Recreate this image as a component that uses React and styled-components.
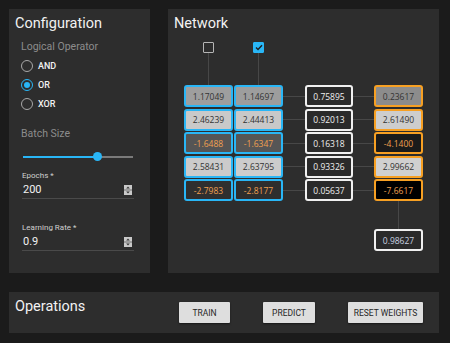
import styled, { createGlobalStyle } from 'styled-components'

const GlobalStyle = createGlobalStyle`
  html, body {
    margin: 0;
    padding: 0;
    background: #1b1b1b;
    font-family: Roboto, "Liberation Sans", sans-serif;
  }
`

const Page = styled.div`
  width: 450px;
  height: 343px;
  box-sizing: border-box;
  padding: 9px 11px 0 9px;
  display: flex;
  flex-direction: column;
  gap: 19px;
`
const TopRow = styled.div`
  display: flex;
  gap: 18px;
  height: 264px;
`
const Panel = styled.section`
  background: #2d2d2d;
  box-sizing: border-box;
  width: ${(p) => p.$width}px;
`
const Title = styled.h2`
  margin: 0;
  font-size: 14.5px;
  font-weight: 400;
  color: #f2f2f2;
  line-height: 17px;
`

const ConfigPanel = styled(Panel)`
  padding: 6px 0 0 6px;
`
const ConfigBody = styled.div`
  padding: 0 0 0 6px;
  display: flex;
  flex-direction: column;
`
const GroupLabel = styled.div`
  font-size: 10.5px;
  color: #8c8c8c;
  line-height: 13px;
  margin-top: ${(p) => p.$top}px;
`
const RadioList = styled.div`
  display: flex;
  flex-direction: column;
  gap: 7px;
  margin-top: 7px;
`
const RadioRow = styled.label`
  display: flex;
  align-items: center;
  gap: 5px;
  font-size: 9px;
  font-weight: 500;
  color: #f2f2f2;
  height: 12px;
`
const RadioDot = styled.span`
  width: 12px;
  height: 12px;
  box-sizing: border-box;
  border-radius: 50%;
  border: 1.5px solid ${(p) => (p.$on ? '#29b6f6' : '#a8a8a8')};
  display: flex;
  align-items: center;
  justify-content: center;
  &::after {
    content: '';
    width: 6px;
    height: 6px;
    border-radius: 50%;
    background: ${(p) => (p.$on ? '#29b6f6' : 'transparent')};
  }
`
const Slider = styled.div`
  margin: 12px 0 0 2px;
  width: 110px;
  height: 9px;
  display: flex;
  align-items: center;
`
const SliderFill = styled.div`
  height: 2px;
  background: #29b6f6;
`
const SliderThumb = styled.div`
  width: 9px;
  height: 9px;
  border-radius: 50%;
  background: #29b6f6;
  margin: 0 -4.5px;
  position: relative;
`
const SliderRest = styled.div`
  flex: 1;
  height: 2px;
  background: #7a7a7a;
`
const Field = styled.div`
  margin: ${(p) => p.$top}px 0 0 1px;
  width: 112px;
  border-bottom: 1px solid #4a4a4a;
  padding-bottom: 3px;
`
const FieldLabel = styled.div`
  font-size: 8px;
  color: #cfcfcf;
  line-height: 9px;
`
const FieldRow = styled.div`
  display: flex;
  align-items: center;
  justify-content: space-between;
  margin-top: 4px;
  padding: 0 2px 0 1px;
  height: 11px;
`
const FieldValue = styled.span`
  font-size: 11px;
  color: #f2f2f2;
`

const Spinner = () => (
  <svg width="8" height="10" viewBox="0 0 8 10">
    <rect x="0" y="0" width="8" height="10" fill="#c9c9c9" />
    <rect x="0" y="4.6" width="8" height="0.8" fill="#5a5a5a" />
    <path d="M2.2 3.4 L4 1.6 L5.8 3.4 Z" fill="#333" />
    <path d="M2.2 6.6 L4 8.4 L5.8 6.6 Z" fill="#333" />
  </svg>
)

const NetPanel = styled(Panel)`
  padding: 6px 0 0 6px;
  display: flex;
  flex-direction: column;
`
const Diagram = styled.div`
  margin: 10px 0 0 10px;
  display: flex;
  flex-direction: column;
`
const InputHeads = styled.div`
  display: flex;
  gap: 1px;
`
const InputHead = styled.div`
  width: 49px;
  display: flex;
  flex-direction: column;
  align-items: center;
`
const Check = styled.div`
  width: 11px;
  height: 11px;
  box-sizing: border-box;
  border-radius: 1px;
  border: 1.5px solid ${(p) => (p.$on ? '#29b6f6' : '#b5b5b5')};
  background: ${(p) => (p.$on ? '#29b6f6' : 'transparent')};
  display: flex;
  align-items: center;
  justify-content: center;
`
const VLine = styled.div`
  width: 1px;
  height: ${(p) => p.$h}px;
  background: #474747;
`
const Rows = styled.div`
  display: flex;
  flex-direction: column;
  gap: 1.5px;
`
const Row = styled.div`
  display: flex;
  align-items: center;
  height: 22px;
`
const Link = styled.div`
  width: ${(p) => p.$w}px;
  height: 1px;
  background: #474747;
`
const Cell = styled.div`
  width: ${(p) => p.$w || 49}px;
  height: 22px;
  box-sizing: border-box;
  border: 2px solid ${(p) => p.$border};
  border-radius: 3px;
  background: ${(p) => p.$bg};
  color: ${(p) => p.$color};
  font-family: "Open Sans", "Noto Sans", sans-serif;
  font-size: 8.5px;
  display: flex;
  align-items: center;
  justify-content: center;
  margin-right: ${(p) => p.$mr || 0}px;
`
const OutputTail = styled.div`
  display: flex;
  flex-direction: column;
  align-items: center;
  width: 49px;
  margin-left: 190px;
`

const OpsPanel = styled(Panel)`
  height: 41px;
  padding: 6px 0 0 6px;
  display: flex;
`
const OpsTitle = styled(Title)`
  width: 164px;
`
const Buttons = styled.div`
  display: flex;
  gap: 33px;
  margin-top: 4px;
`
const Button = styled.button`
  height: 21px;
  width: ${(p) => p.$w}px;
  border: none;
  border-radius: 1px;
  background: #dedede;
  color: #262626;
  font-family: Roboto, "Liberation Sans", sans-serif;
  font-size: 8.5px;
  padding: 0;
  box-shadow: 0 1px 2px rgba(0, 0, 0, 0.5);
`

const BLUE = '#29b6f6'
const ORANGE = '#f7a023'
const NEG = '#f0a050'

const inputs = [
  [['1.17049', '#9e9e9e'], ['1.14697', '#9d9d9d']],
  [['2.46239', '#c9c9c9'], ['2.44413', '#c8c8c8']],
  [['-1.6488', '#555555'], ['-1.6347', '#565656']],
  [['2.58431', '#cbcbcb'], ['2.63795', '#cccccc']],
  [['-2.7983', '#2f2f2f'], ['-2.8177', '#2e2e2e']],
]
const hidden = ['0.75895', '0.92013', '0.16318', '0.93326', '0.05637']
const outputs = [
  ['0.23617', '#8c8c8c'],
  ['2.61490', '#cdcdcd'],
  ['-4.1400', '#1b1b1b'],
  ['2.99662', '#d0d0d0'],
  ['-7.6617', '#000000'],
]

const textFor = (v) => (v.startsWith('-') ? NEG : '#333333')

export default function App() {
  return (
    <>
      <GlobalStyle />
      <Page>
        <TopRow>
          <ConfigPanel $width={141}>
            <Title>Configuration</Title>
            <ConfigBody>
              <GroupLabel $top={8}>Logical Operator</GroupLabel>
              <RadioList>
                {['AND', 'OR', 'XOR'].map((op) => (
                  <RadioRow key={op}>
                    <RadioDot $on={op === 'OR'} />
                    {op}
                  </RadioRow>
                ))}
              </RadioList>
              <GroupLabel $top={17}>Batch Size</GroupLabel>
              <Slider>
                <SliderFill style={{ width: '68%' }} />
                <SliderThumb />
                <SliderRest />
              </Slider>
              <Field $top={10}>
                <FieldLabel>Epochs *</FieldLabel>
                <FieldRow>
                  <FieldValue>200</FieldValue>
                  <Spinner />
                </FieldRow>
              </Field>
              <Field $top={24}>
                <FieldLabel>Learning Rate *</FieldLabel>
                <FieldRow>
                  <FieldValue>0.9</FieldValue>
                  <Spinner />
                </FieldRow>
              </Field>
            </ConfigBody>
          </ConfigPanel>

          <NetPanel $width={271}>
            <Title>Network</Title>
            <Diagram>
              <InputHeads>
                <InputHead>
                  <Check />
                  <VLine $h={32} />
                </InputHead>
                <InputHead>
                  <Check $on>
                    <svg width="8" height="7" viewBox="0 0 8 7">
                      <path d="M1 3.6 L3 5.5 L7 1.2" fill="none" stroke="#1d1d1d" strokeWidth="1.4" />
                    </svg>
                  </Check>
                  <VLine $h={32} />
                </InputHead>
              </InputHeads>
              <Rows>
                {inputs.map((pair, i) => (
                  <Row key={i}>
                    <Cell $border={BLUE} $bg={pair[0][1]} $color={textFor(pair[0][0])} $mr={1}>
                      {pair[0][0]}
                    </Cell>
                    <Cell $border={BLUE} $bg={pair[1][1]} $color={textFor(pair[1][0])}>
                      {pair[1][0]}
                    </Cell>
                    <Link $w={22} />
                    <Cell $w={48} $border="#f0f0f0" $bg="#2a2a2a" $color="#f0f0f0">
                      {hidden[i]}
                    </Cell>
                    <Link $w={21} />
                    <Cell $border={ORANGE} $bg={outputs[i][1]} $color={textFor(outputs[i][0])}>
                      {outputs[i][0]}
                    </Cell>
                  </Row>
                ))}
              </Rows>
              <OutputTail>
                <VLine $h={28} />
                <Cell $border="#f0f0f0" $bg="#2a2a2a" $color="#c9d2e0">
                  0.98627
                </Cell>
              </OutputTail>
            </Diagram>
          </NetPanel>
        </TopRow>

        <OpsPanel $width={430}>
          <OpsTitle>Operations</OpsTitle>
          <Buttons>
            <Button $w={51}>TRAIN</Button>
            <Button $w={52}>PREDICT</Button>
            <Button $w={75}>RESET WEIGHTS</Button>
          </Buttons>
        </OpsPanel>
      </Page>
    </>
  )
}
